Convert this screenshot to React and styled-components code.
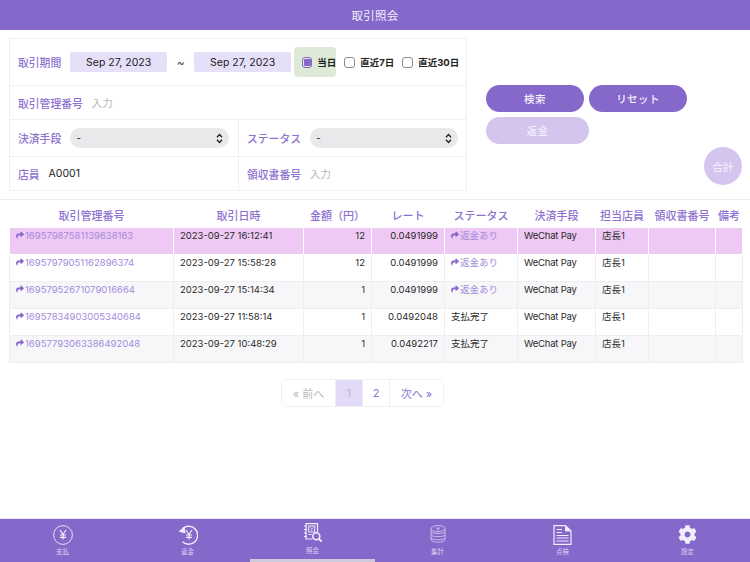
import React from 'react';
import styled, { createGlobalStyle } from 'styled-components';
import { FaShare, FaCog } from 'react-icons/fa';

const Global = createGlobalStyle`
    html, body { margin: 0; padding: 0; background: #fff; }
    body { font-family: Inter, "Noto Sans CJK JP", sans-serif; }
    * { box-sizing: border-box; }
`;

const purple = '#8668cb';
const label = '#8d72cf';

const Page = styled.div`
    width: 750px;
    height: 562px;
    display: flex;
    flex-direction: column;
    overflow: hidden;
`;
const Header = styled.div`
    height: 30px;
    flex: none;
    background: ${purple};
    color: #f1ecfa;
    font-size: 11.5px;
    letter-spacing: 0.3px;
    display: flex;
    align-items: center;
    justify-content: center;
`;
const Top = styled.div`
    height: 170px;
    flex: none;
    display: flex;
    padding: 8px 8px 0 9px;
    border-bottom: 1px solid #eeeef0;
`;
const Form = styled.div`
    width: 458px;
    height: 153px;
    border: 1px solid #f0f0f4;
    display: grid;
    grid-template-columns: 229px 1fr;
    grid-template-rows: 47px 34px 37px 1fr;
`;
const Row = styled.div`
    grid-column: ${p => (p.$half ? 'auto' : '1 / 3')};
    display: flex;
    align-items: center;
    padding-left: 8px;
    border-bottom: ${p => (p.$last ? 'none' : '1px solid #f0f0f4')};
    border-right: ${p => (p.$split ? '1px solid #f0f0f4' : 'none')};
`;
const Label = styled.span`
    color: ${label};
    font-size: 10.8px;
    font-weight: 500;
    white-space: nowrap;
    margin-right: 9px;
`;
const DateBox = styled.div`
    width: 97px;
    height: 20px;
    background: #e6dff8;
    border-radius: 2px;
    color: #222;
    font-size: 10.5px;
    display: flex;
    align-items: center;
    justify-content: center;
`;
const Tilde = styled.span`
    width: 27px;
    text-align: center;
    color: #555;
    font-size: 12px;
`;
const Check = styled.label`
    display: flex;
    align-items: center;
    gap: 5px;
    height: ${p => (p.$on ? '30px' : 'auto')};
    width: ${p => (p.$on ? '42px' : 'auto')};
    margin-left: ${p => p.$gap}px;
    padding-left: ${p => (p.$on ? '8px' : '0')};
    background: ${p => (p.$on ? '#dfe9d8' : 'transparent')};
    border-radius: 4px;
    font-size: 9.5px;
    font-weight: 700;
    color: #222;
    white-space: nowrap;
`;
const Box = styled.span`
    width: 11px;
    height: 11px;
    border-radius: 3px;
    border: 1px solid ${p => (p.$on ? purple : '#8a8a8a')};
    display: flex;
    align-items: center;
    justify-content: center;
    &::after {
        content: '';
        display: ${p => (p.$on ? 'block' : 'none')};
        width: 7px;
        height: 7px;
        border-radius: 1px;
        background: ${purple};
    }
`;
const Hint = styled.span`
    color: #b8b8b8;
    font-size: 10.5px;
`;
const Value = styled.span`
    color: #222;
    font-size: 10.5px;
`;
const Select = styled.div`
    width: ${p => p.$w}px;
    height: 20px;
    border-radius: 10px;
    background: #e9e9eb;
    display: flex;
    align-items: center;
    justify-content: space-between;
    padding: 0 6px;
    font-size: 10.5px;
    color: #333;
`;
const Side = styled.div`
    flex: 1;
    display: flex;
    flex-direction: column;
    padding: 47px 0 0 19px;
`;
const Buttons = styled.div`
    display: flex;
    gap: 5px;
    margin-bottom: 5px;
`;
const Button = styled.div`
    width: ${p => p.$w}px;
    height: 27px;
    border-radius: 14px;
    background: ${p => (p.$off ? '#d4c5ef' : purple)};
    color: ${p => (p.$off ? '#f3eefb' : '#f4f0fb')};
    font-size: 10.5px;
    font-weight: 500;
    letter-spacing: 0.4px;
    display: flex;
    align-items: center;
    justify-content: center;
`;
const Total = styled.div`
    align-self: flex-end;
    width: 38px;
    height: 38px;
    border-radius: 50%;
    margin-top: 3px;
    background: #d4c5ef;
    color: #f6f2fc;
    font-size: 10.5px;
    display: flex;
    align-items: center;
    justify-content: center;
`;
const Table = styled.table`
    width: 733px;
    margin-left: 9px;
    flex: none;
    border-collapse: collapse;
    table-layout: fixed;
`;
const Th = styled.th`
    height: 27px;
    padding: 3px 0 0;
    color: ${label};
    font-size: 11px;
    font-weight: 500;
    text-align: center;
    white-space: nowrap;
`;
const Tr = styled.tr`
    background: ${p => (p.$sel ? '#eec9f4' : p.$alt ? '#f7f7f9' : '#fff')};
`;
const Td = styled.td`
    height: 27px;
    padding: 1px 6px 0;
    vertical-align: top;
    font-size: 9.5px;
    line-height: 13px;
    color: #2a2a2a;
    white-space: nowrap;
    text-align: ${p => (p.$right ? 'right' : 'left')};
    border: 1px solid ${p => (p.$onsel ? '#fff' : '#eeeef1')};
    border-top-color: #fff;
`;
const Link = styled.span`
    display: inline-flex;
    align-items: center;
    gap: 1px;
    color: #a48cdc;
    svg { color: ${purple}; font-size: 8px; }
`;
const Method = styled.span`
    letter-spacing: -0.2px;
`;
const Pager = styled.div`
    flex: none;
    display: flex;
    align-self: flex-start;
    margin: 16px 0 0 281px;
    height: 28px;
    border: 1px solid #efeff2;
    border-radius: 5px;
    overflow: hidden;
`;
const PageCell = styled.div`
    width: ${p => p.$w}px;
    display: flex;
    align-items: center;
    justify-content: center;
    font-size: 11px;
    color: ${p => (p.$muted ? '#b9b9bd' : label)};
    background: ${p => (p.$on ? '#e2d9f6' : '#fff')};
    border-right: ${p => (p.$end ? 'none' : '1px solid #efeff2')};
`;
const TabBar = styled.div`
    margin-top: auto;
    flex: none;
    position: relative;
    height: 44px;
    background: ${purple};
    border-top: 1px solid #e9e4f5;
    display: grid;
    grid-template-columns: repeat(6, 125px);
`;
const Tab = styled.div`
    display: flex;
    flex-direction: column;
    align-items: center;
    padding-top: ${p => (p.$raised ? 4 : 6)}px;
    color: #dcd3f2;
    font-size: 6.5px;
    line-height: 8px;
    svg { display: block; }
`;
const TabIcon = styled.div`
    height: ${p => (p.$raised ? 24 : 23)}px;
    display: flex;
    align-items: flex-start;
    color: #f1edfb;
`;
const HomeBar = styled.div`
    position: absolute;
    left: 250px;
    bottom: 0;
    width: 125px;
    height: 3px;
    background: #cfc9dc;
`;

const YenGlyph = ({ cx, cy }) => (
    <path
        d={`M${cx - 3} ${cy - 4.5}L${cx} ${cy}L${cx + 3} ${cy - 4.5}M${cx} ${cy}V${cy + 5}M${cx - 3} ${cy + .5}H${cx + 3}M${cx - 3} ${cy + 2.8}H${cx + 3}`}
        fill="none"
        stroke="currentColor"
        strokeWidth="1.2"
    />
);
const PayIcon = () => (
    <svg width="20" height="20" viewBox="0 0 20 20">
        <circle cx="10" cy="10" r="9.4" fill="none" stroke="currentColor" strokeWidth=".9" />
        <YenGlyph cx={10} cy={9.5} />
    </svg>
);
const RefundIcon = () => (
    <svg width="20" height="20" viewBox="0 0 20 20">
        <path d="M5 3.2A9 9 0 1 1 4.5 16.8" fill="none" stroke="currentColor" strokeWidth="1.4" />
        <path d="M0.5 6.5L6.5 1.5L7.5 8.5Z" fill="currentColor" />
        <YenGlyph cx={11} cy={9.5} />
    </svg>
);
const SearchIcon = () => (
    <svg width="20" height="20" viewBox="0 0 20 20">
        <path d="M9.5 16H3V.7H14.5V9" fill="none" stroke="currentColor" strokeWidth="1.2" />
        <path d="M1 3H4M1 6.5H4M1 10H4M1 13.5H4" stroke="currentColor" strokeWidth="1" />
        <rect x="5.7" y="3" width="6" height="6" fill="none" stroke="currentColor" strokeWidth="1" />
        <path d="M7 4.2L8.7 6.3L10.4 4.2M8.7 6.3V8" fill="none" stroke="currentColor" strokeWidth=".7" />
        <path d="M5.5 11.5H8.5" stroke="currentColor" strokeWidth="1" />
        <circle cx="13.3" cy="13.3" r="3.5" fill="none" stroke="currentColor" strokeWidth="1.6" />
        <path d="M15.8 15.8L18.6 18.6" stroke="currentColor" strokeWidth="2" />
    </svg>
);
const CoinsIcon = () => (
    <svg width="16" height="18" viewBox="0 0 16 18" fill="none" stroke="#d8cff0" strokeWidth=".8">
        <ellipse cx="8" cy="3.6" rx="7" ry="3.1" />
        <path d="M6.2 2.2L8 3.7L9.8 2.2M8 3.7V5.4M6.4 3.9H9.6" strokeWidth=".7" />
        <path d="M1 3.6V6.7C1 9.1 15 9.1 15 6.7V3.6" />
        <path d="M1 6.7V9.8C1 12.2 15 12.2 15 9.8V6.7" />
        <path d="M1 9.8V12.9C1 15.3 15 15.3 15 12.9V9.8" />
        <path d="M1 12.9V14.3C1 18.2 15 18.2 15 14.3V12.9" />
    </svg>
);
const DocIcon = () => (
    <svg width="19" height="20" viewBox="0 0 19 20" fill="none" stroke="currentColor">
        <path d="M1 .7H12.5L18 6V19.3H1Z" strokeWidth="1.2" />
        <path d="M12.5 .7V6H18" fill="currentColor" strokeWidth=".8" />
        <path d="M3.5 4.5H9M3.5 7.5H9M3.5 10.5H15.5M3.5 13H15.5M3.5 16H15.5" strokeWidth="1.1" />
    </svg>
);
const Arrows = () => (
    <svg width="7" height="11" viewBox="0 0 7 11" fill="none" stroke="#222" strokeWidth="1.3">
        <path d="M1 4.3L3.5 1.5L6 4.3M1 6.7L3.5 9.5L6 6.7" />
    </svg>
);

const rows = [
    ['16957987581139638163', '2023-09-27 16:12:41', '12', '0.0491999', true],
    ['16957979051162896374', '2023-09-27 15:58:28', '12', '0.0491999', true],
    ['16957952671079016664', '2023-09-27 15:14:34', '1', '0.0491999', true],
    ['16957834903005340684', '2023-09-27 11:58:14', '1', '0.0492048', false],
    ['16957793063386492048', '2023-09-27 10:48:29', '1', '0.0492217', false],
];
const columns = [
    ['取引管理番号', 164],
    ['取引日時', 130],
    ['金額（円）', 68],
    ['レート', 73],
    ['ステータス', 73],
    ['決済手段', 78],
    ['担当店員', 53],
    ['領収書番号', 67],
    ['備考', 27],
];
const tabs = [
    ['支払', <PayIcon />],
    ['返金', <RefundIcon />],
    ['照会', <SearchIcon />, true],
    ['集計', <CoinsIcon />],
    ['点検', <DocIcon />],
    ['設定', <FaCog size={19} />],
];

const App = () => {
    return (
        <Page>
            <Global />
            <Header>取引照会</Header>
            <Top>
                <Form>
                    <Row>
                        <Label>取引期間</Label>
                        <DateBox>Sep 27, 2023</DateBox>
                        <Tilde>~</Tilde>
                        <DateBox>Sep 27, 2023</DateBox>
                        <Check $on $gap={3}><Box $on />当日</Check>
                        <Check $gap={8}><Box />直近7日</Check>
                        <Check $gap={8}><Box />直近30日</Check>
                    </Row>
                    <Row>
                        <Label>取引管理番号</Label>
                        <Hint>入力</Hint>
                    </Row>
                    <Row $half $split>
                        <Label>決済手段</Label>
                        <Select $w={159}>-<Arrows /></Select>
                    </Row>
                    <Row $half>
                        <Label>ステータス</Label>
                        <Select $w={148}>-<Arrows /></Select>
                    </Row>
                    <Row $half $split $last>
                        <Label>店員</Label>
                        <Value>A0001</Value>
                    </Row>
                    <Row $half $last>
                        <Label>領収書番号</Label>
                        <Hint>入力</Hint>
                    </Row>
                </Form>
                <Side>
                    <Buttons>
                        <Button $w={98}>検索</Button>
                        <Button $w={98}>リセット</Button>
                    </Buttons>
                    <Button $w={103} $off>返金</Button>
                    <Total>合計</Total>
                </Side>
            </Top>
            <Table>
                <colgroup>
                    {columns.map(([name, w]) => <col key={name} width={w} />)}
                </colgroup>
                <thead>
                    <tr>{columns.map(([name]) => <Th key={name}>{name}</Th>)}</tr>
                </thead>
                <tbody>
                    {rows.map((r, i) => {
                        const sel = i === 0;
                        return (
                            <Tr key={r[0]} $sel={sel} $alt={i % 2 === 0}>
                                <Td $onsel={sel}><Link><FaShare />{r[0]}</Link></Td>
                                <Td $onsel={sel}>{r[1]}</Td>
                                <Td $onsel={sel} $right>{r[2]}</Td>
                                <Td $onsel={sel} $right>{r[3]}</Td>
                                <Td $onsel={sel}>
                                    {r[4] ? <Link><FaShare />返金あり</Link> : '支払完了'}
                                </Td>
                                <Td $onsel={sel}><Method>WeChat Pay</Method></Td>
                                <Td $onsel={sel}>店長1</Td>
                                <Td $onsel={sel} />
                                <Td $onsel={sel} />
                            </Tr>
                        );
                    })}
                </tbody>
            </Table>
            <Pager>
                <PageCell $w={54} $muted>« 前へ</PageCell>
                <PageCell $w={27} $on $muted>1</PageCell>
                <PageCell $w={27}>2</PageCell>
                <PageCell $w={53} $end>次へ »</PageCell>
            </Pager>
            <TabBar>
                {tabs.map(([name, icon, raised]) => (
                    <Tab key={name} $raised={raised}>
                        <TabIcon $raised={raised}>{icon}</TabIcon>
                        {name}
                    </Tab>
                ))}
                <HomeBar />
            </TabBar>
        </Page>
    );
};

export default App;
